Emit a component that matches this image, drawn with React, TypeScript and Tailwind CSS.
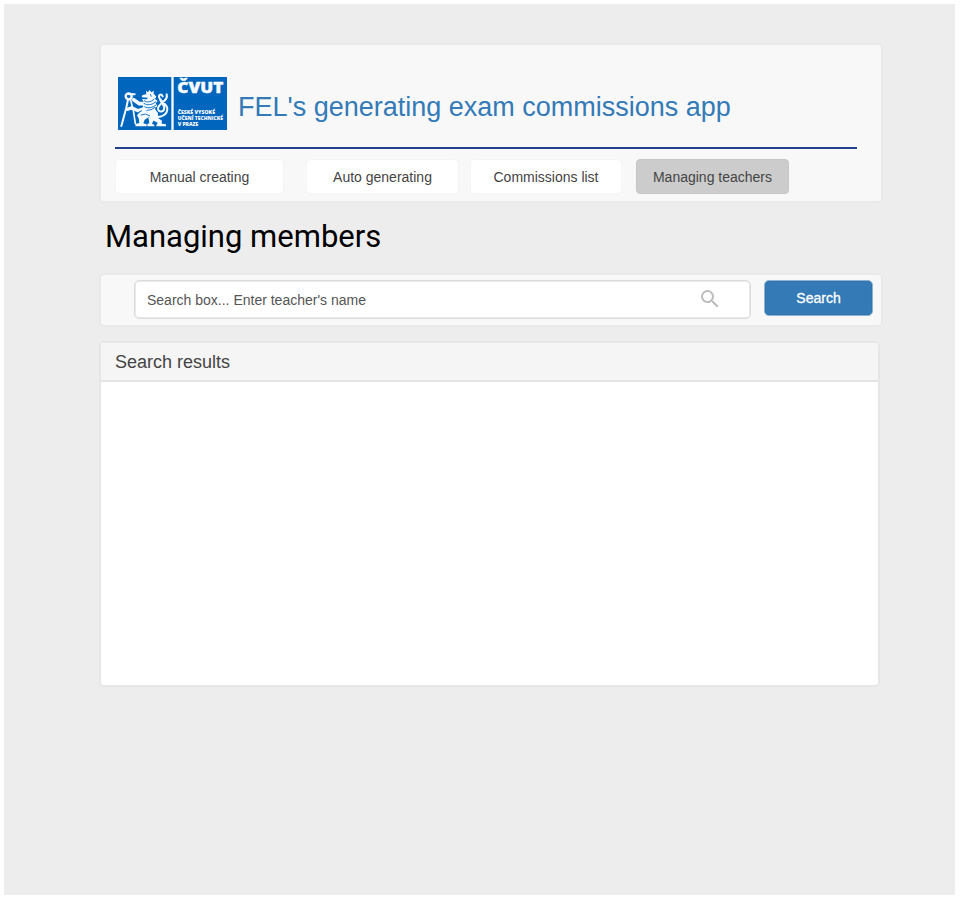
import React from "react";

const sans = "font-['Liberation_Sans',Arial,sans-serif]";

function Logo() {
  return (
    <svg width="109" height="53" viewBox="0 0 327 159" className="block shrink-0" role="img" aria-label="ČVUT">
      <rect width="327" height="159" fill="#0065bd" />
      <rect x="160" width="7" height="159" fill="#f8f8f8" />
      <g fill="none" stroke="#f4faff" strokeLinecap="round" strokeLinejoin="round">
        {/* compass */}
        <circle cx="32" cy="58" r="9" strokeWidth="7" />
        <path d="M30 68 L24 96 L10 147" strokeWidth="6" />
        <path d="M37 66 L46 100 L52 140" strokeWidth="5" />
        <path d="M26 51 L50 52" strokeWidth="6" />
        {/* forelegs */}
        <path d="M82 80 L64 80 L47 68" strokeWidth="11" />
        <path d="M80 95 L60 101 L41 92 L29 97" strokeWidth="10" />
        {/* tail */}
        <path d="M114 118 C130 124 148 111 148 95 C148 79 124 73 123 59 C123 51 131 51 134 58 M146 52 C153 72 120 78 120 95 C121 108 139 105 139 92 C138 83 128 77 125 64" strokeWidth="6" />
      </g>
      <g fill="#f4faff">
        {/* crown and head */}
        <path d="M84 41 L90 46 L95 39 L100 46 L107 41 L107 54 L85 53Z" />
        <path d="M84 52 L108 51 L115 59 L111 65 L119 73 L113 78 L118 88 L111 92 L113 104 L101 103 L92 110 L80 99 L72 97 L76 87 L68 79 L77 74 L72 66 L86 67 L90 62 L71 61 L73 54Z" />
        {/* torso and hind legs */}
        <path d="M75 94 L90 108 L110 96 L120 108 L119 122 L132 131 L131 140 L144 142 L144 148 L114 148 L119 137 L104 130 L92 121 L80 128 L76 139 L86 142 L86 148 L52 148 L53 141 L64 138 L62 124 L57 115 L68 103Z" />
        <path d="M91 121 L107 129 L102 141 L109 143 L109 148 L88 148 L88 142 L94 138Z" />
      </g>
      <g fill="none" stroke="#0065bd" strokeWidth="2.6">
        <path d="M78 71 Q93 81 109 66 M77 79 Q95 90 114 74 M79 89 Q96 98 114 84 M86 100 Q100 101 111 91 M97 51 L100 59" />
        <path d="M68 114 Q83 107 96 117 M61 106 L72 101" />
      </g>
      <g fill="#f8fbff" stroke="#f8fbff" className="font-['Open_Sans',sans-serif] font-extrabold">
        <text x="178" y="48" fontSize="45" strokeWidth="1.2" textLength="138" lengthAdjust="spacingAndGlyphs">ČVUT</text>
        <g strokeWidth="0" fontSize="14.5">
          <text x="179" y="112" textLength="112" lengthAdjust="spacingAndGlyphs">ČESKÉ VYSOKÉ</text>
          <text x="179" y="130" textLength="136" lengthAdjust="spacingAndGlyphs">UČENÍ TECHNICKÉ</text>
          <text x="179" y="148" textLength="62" lengthAdjust="spacingAndGlyphs">V PRAZE</text>
        </g>
      </g>
    </svg>
  );
}

const tab = "h-[35px] rounded border text-sm leading-[33px] pt-px text-center text-[#444] whitespace-nowrap";

export default function App() {
  return (
    <div className={`w-[960px] h-[900px] bg-white pt-1 pl-1 overflow-hidden ${sans}`}>
      <div className="w-[951px] h-[891px] bg-[#ededed] pl-[95px] pt-[39px]">
        <header className="w-[784px] h-[160px] rounded-[5px] border border-[#e8e8e8] shadow-[inset_0_0_0_1px_#ebebeb] bg-[#f8f8f8] pl-[15px] pt-[33px]">
          <div className="flex h-[53px] pl-[3px]">
            <Logo />
            <div className="ml-[11px] pt-[13px] text-[27px] leading-[34px] text-[#337ab7] whitespace-nowrap">
              FEL's generating exam commissions app
            </div>
          </div>
          <div className="mt-[17px] w-[742px] h-[2px] bg-[#27408b]" />
          <nav className="mt-[10px] flex">
            <button className={`${tab} w-[169px] bg-white border-[#f4f4f4]`}>Manual creating</button>
            <button className={`${tab} ml-[22px] w-[153px] bg-white border-[#f4f4f4]`}>Auto generating</button>
            <button className={`${tab} ml-[11px] w-[152px] bg-white border-[#f4f4f4]`}>Commissions list</button>
            <button className={`${tab} ml-[14px] w-[153px] bg-[#ccc] border-[#c6c6c6]`}>Managing teachers</button>
          </nav>
        </header>
        <h1 className="mt-[14px] h-10 pl-[6px] font-['Roboto',sans-serif] text-[31px] leading-10 text-black whitespace-nowrap">
          Managing members
        </h1>
        <section className="mt-[16px] flex w-[784px] h-[54px] rounded-[5px] border border-[#e8e8e8] shadow-[inset_0_0_0_1px_#ebebeb] bg-[#f8f8f8] pl-[34px] pt-[6px]">
          <div className="flex w-[617px] h-[39px] rounded-[5px] border border-[#dcdcdc] shadow-[inset_0_0_0_1px_#e9e9e9] bg-white pl-[12px] text-sm leading-[39px] text-[#555]">
            <span>Search box... Enter teacher's name</span>
            <svg className="ml-auto mr-[28px] mt-[6px]" width="24" height="24" viewBox="0 0 24 24" fill="#bcbcbc">
              <path d="M15.5 14h-.79l-.28-.27A6.471 6.471 0 0 0 16 9.500 6.500 6.500 0 1 0 9.500 16c1.610 0 3.090-.59 4.230-1.570l.27.28v.79l5 4.990L20.490 19l-4.990-5zm-6 0C7.010 14 5 11.990 5 9.500S7.010 5 9.500 5 14 7.010 14 9.500 11.990 14 9.500 14z" />
            </svg>
          </div>
          <button className="ml-[13px] w-[109px] h-[36px] rounded-[5px] border border-[#8fb4d3] shadow-[inset_0_0_0_1px_#3174b0] bg-[#337ab7] text-sm leading-[34px] text-white [-webkit-text-stroke:0.3px_white]">
            Search
          </button>
        </section>
        <section className="mt-[14px] w-[781px] h-[346px] rounded-[5px] border border-[#e6e6e6] shadow-[inset_0_0_0_1px_#e6e6e6] bg-white p-px overflow-hidden">
          <h2 className="h-[39px] border-b-2 border-[#e4e4e4] bg-[#f5f5f5] pl-[14px] text-[18px] leading-[38px] text-[#444]">
            Search results
          </h2>
        </section>
      </div>
    </div>
  );
}
